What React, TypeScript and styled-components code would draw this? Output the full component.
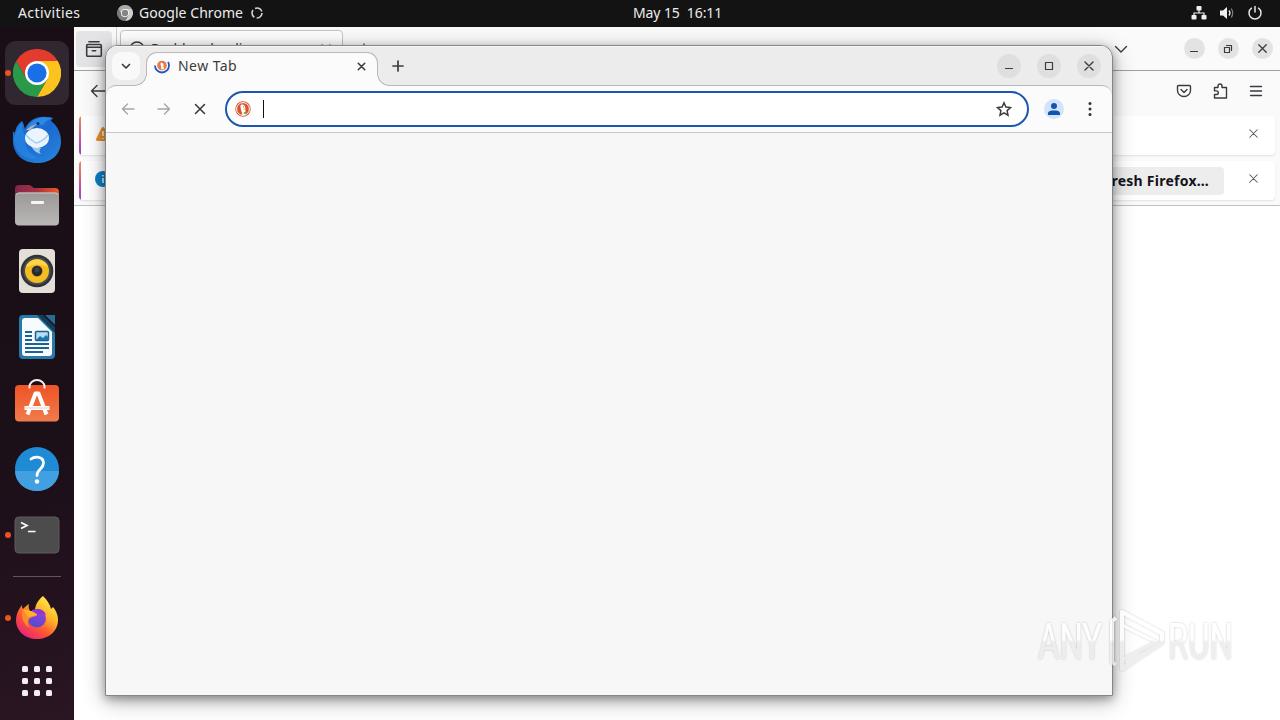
import type { FC, ReactNode } from 'react';
import styled, { createGlobalStyle } from 'styled-components';

const GlobalStyle = createGlobalStyle`
    * {
        box-sizing: border-box;
    }

    body {
        margin: 0;
        overflow: hidden;

        font-family: 'Noto Sans', 'Open Sans', sans-serif;
    }

    svg {
        display: block;
        flex-shrink: 0;
    }
`;

const Desktop = styled.div`
    position: relative;
    display: flex;
    flex-direction: column;

    width: 1280px;
    height: 720px;
    overflow: hidden;

    background: #fff;
`;

/* top panel */

const TopBar = styled.header`
    display: grid;
    grid-template-columns: 615px auto 1fr;
    align-items: center;
    flex-shrink: 0;

    height: 27px;
    padding: 0 17px 1px 18px;

    color: #ececec;
    background: #131313;
`;

const PanelGroup = styled.div<{ $end?: boolean }>`
    display: flex;
    align-items: center;
    justify-content: ${({ $end }) => ($end ? 'flex-end' : 'flex-start')};
    gap: ${({ $end }) => ($end ? '12px' : '0')};
`;

const PanelText = styled.span<{ $width: number; $spacing?: number }>`
    width: ${({ $width }) => $width}px;

    font-size: 14px;
    line-height: 26px;
    letter-spacing: ${({ $spacing = 0 }) => $spacing}px;
    white-space: pre;
`;

const AppMenu = styled.div`
    display: flex;
    align-items: center;
    gap: 6px;

    margin-left: 37px;
`;

/* dock */

const Workspace = styled.div`
    display: flex;
    flex: 1;

    min-height: 0;
`;

const Dock = styled.nav`
    display: flex;
    flex-direction: column;
    align-items: center;
    flex-shrink: 0;

    width: 74px;
    padding-top: 13px;

    background: linear-gradient(165deg, #190e16 0%, #1b0f18 60%, #2a1523 100%);
`;

const DockCell = styled.div<{ $running?: boolean; $height?: number }>`
    display: grid;
    grid-template-columns: 5px 64px 5px;
    align-items: center;

    width: 74px;
    height: ${({ $height = 66 }) => $height}px;

    &::before {
        content: '';

        justify-self: start;

        width: 6px;
        height: 6px;
        margin-left: 5px;

        border-radius: 50%;
        background: ${({ $running }) => ($running ? '#e95420' : 'transparent')};
        z-index: 1;
    }
`;

const DockTile = styled.div<{ $active?: boolean; $height?: number }>`
    display: flex;
    align-items: center;
    justify-content: center;

    width: 64px;
    height: ${({ $height = 64 }) => $height}px;

    border-radius: 11px;
    background: ${({ $active }) => ($active ? '#302731' : 'transparent')};
`;

const DockDivider = styled.div`
    width: 48px;
    height: 1px;
    margin: 8px 0;

    background: #60565e;
`;

/* firefox */

const FirefoxWindow = styled.section`
    display: flex;
    flex: 1;
    flex-direction: column;

    min-width: 0;

    color: #3a3a40;
    background: #fff;
`;

const FirefoxTabs = styled.div`
    display: flex;
    align-items: center;
    flex-shrink: 0;

    height: 44px;
    padding: 0 7.5px 0 2px;

    border-bottom: 1px solid #a0a0a4;
    background: #fafafb;
`;

const ArchiveButton = styled.div`
    display: flex;
    align-items: center;
    justify-content: center;

    width: 36px;
    height: 36px;

    border-radius: 4px;
    background: #e4e4e6;
`;

const TabsSeparator = styled.div`
    align-self: stretch;

    width: 1px;
    margin: 0 3px 0 4px;

    background: #cfcfd2;
`;

const FirefoxTab = styled.div`
    display: flex;
    align-items: center;
    gap: 6px;

    width: 223px;
    height: 37px;
    padding: 1px 8px 0 8px;

    border: 1px solid #c4c4c8;
    border-radius: 4px;
    background: #fdfdfd;
`;

const FirefoxTabTitle = styled.span`
    flex: 1;

    font-size: 14px;
    line-height: 20px;
`;

const FirefoxAdd = styled.div`
    flex: 1;

    padding: 2px 0 0 14px;
`;

const WindowButtons = styled.div<{ $gap: number; $inset?: number }>`
    display: flex;
    gap: ${({ $gap }) => $gap}px;

    margin-left: ${({ $inset = 0 }) => $inset}px;
`;

const WindowButton = styled.div<{ $size: number }>`
    display: flex;
    align-items: center;
    justify-content: center;

    width: ${({ $size }) => $size}px;
    height: ${({ $size }) => $size}px;

    border-radius: 50%;
    background: #e3e3e3;
`;

const ChromeButton = styled(WindowButton)`
    margin-top: 2px;

    background: #dfdfdf;
`;

const FirefoxNav = styled.div`
    display: flex;
    align-items: center;
    justify-content: space-between;
    flex-shrink: 0;

    height: 41px;
    padding: 0 16px 1px;

    background: #fafafb;
`;

const NavTools = styled.div`
    display: flex;
    gap: 20px;
`;

const Notices = styled.div`
    display: flex;
    flex-direction: column;
    flex-shrink: 0;
    gap: 6px;

    height: 94px;
    padding: 4px 5px 0;

    border-bottom: 1px solid #c0c0c3;
    background: #fafafb;
`;

const Notice = styled.div`
    display: flex;
    align-items: center;

    height: 39px;
    padding-right: 14px;

    color: #55555b;
    border-radius: 4px;
    background: linear-gradient(#f08a4e, #d0529a 55%, #8a46c8) 0 0 / 2px 100% no-repeat #fff;
    box-shadow: 0 1px 2px rgba(58, 57, 68, 0.13);
`;

const NoticeBody = styled.div`
    display: flex;
    align-items: center;
    flex: 1;

    padding: 0 0 4px 16px;
`;

const NoticeFiller = styled.div`
    flex: 1;
`;

const RefreshButton = styled.div`
    width: 150px;
    height: 28px;
    margin: 4px 22px 0 0;
    padding-right: 15px;

    font-size: 14px;
    font-weight: 700;
    line-height: 27px;
    text-align: right;
    letter-spacing: 0.25px;
    white-space: nowrap;

    color: #15141a;
    border-radius: 4px;
    background: #ededee;
`;

/* chrome */

const ChromeShadow = styled.div`
    position: absolute;
    top: 45px;
    left: 105px;

    width: 1008px;
    height: 651px;

    border-radius: 12px 12px 0 0;
    box-shadow:
        0 3px 10px rgba(0, 0, 0, 0.32),
        0 5px 22px rgba(0, 0, 0, 0.3);
`;

const ChromeWindow = styled.section`
    position: absolute;
    top: 45px;
    left: 105px;
    display: flex;
    flex-direction: column;

    width: 1008px;
    height: 651px;
    overflow: hidden;

    color: #3c3c3c;
    border: 1px solid #858585;
    border-radius: 12px 12px 0 0;
    background: #ececec;
`;

const ChromeStrip = styled.div`
    display: flex;
    align-items: flex-start;
    flex-shrink: 0;

    height: 39px;
    padding: 6px 11px 0 6px;

    box-shadow: inset 0 1px 0 #f8f8f8;
`;

const TabSearch = styled.div`
    position: relative;
    display: flex;
    align-items: center;
    justify-content: center;
    z-index: 2;

    width: 28px;
    height: 28px;
    margin-right: 6px;

    border-radius: 9px;
    background: #f9f9f9;
`;

const ChromeTab = styled.div`
    position: relative;
    display: flex;
    align-items: center;
    gap: 8px;
    z-index: 1;

    width: 232px;
    height: 34px;
    padding: 0 9px 7px 7px;

    border: 1px solid #b9b9b9;
    border-bottom: 0;
    border-radius: 11px 11px 0 0;
    background: #fbfbfb;

    &::before,
    &::after {
        position: absolute;
        bottom: 0;

        content: '';

        width: 12px;
        height: 12px;
    }

    &::before {
        left: -12px;

        background: radial-gradient(circle at 0 0, #ececec 10.5px, #b9b9b9 11px, #b9b9b9 11.5px, #fbfbfb 12px);
    }

    &::after {
        right: -12px;

        background: radial-gradient(circle at 100% 0, #ececec 10.5px, #b9b9b9 11px, #b9b9b9 11.5px, #fbfbfb 12px);
    }
`;

const ChromeTabTitle = styled.span`
    flex: 1;

    font-size: 14px;
    line-height: 20px;
    letter-spacing: 0.45px;
`;

const NewTabButton = styled.div`
    flex: 1;

    padding: 6px 0 0 12px;
`;

const ChromeToolbar = styled.div`
    display: flex;
    align-items: center;
    flex-shrink: 0;

    height: 48px;
    padding: 0 14px;

    border-top: 1px solid #b9b9b9;
    border-bottom: 1px solid #c9c9c9;
    border-radius: 10px 10px 0 0;
    background: #fbfbfb;
`;

const ToolbarNav = styled.div`
    display: flex;
    gap: 20px;

    margin-right: 17px;
`;

const Omnibox = styled.div`
    display: flex;
    align-items: center;
    flex: 1;

    height: 36px;
    padding: 0 15px 0 8px;

    border: 2px solid #1a56b4;
    border-radius: 18px;
    background: #fff;
`;

const Caret = styled.div`
    flex: 1;

    height: 18px;
    margin-left: 12px;

    border-left: 1px solid #111;
`;

const ProfileBadge = styled.div`
    display: flex;
    align-items: center;
    justify-content: center;

    width: 20px;
    height: 20px;
    margin: 0 18px 0 15px;

    border-radius: 50%;
    background: #d2e3fb;
`;

const ChromePage = styled.main`
    flex: 1;

    background: #f7f7f7;
`;

const Watermark = styled.svg`
    position: absolute;
    top: 600px;
    left: 1030px;
`;

interface StrokeIconProps {
    size?: number;
    width?: number;
    color?: string;
    children: ReactNode;
}

const StrokeIcon: FC<StrokeIconProps> = ({ size = 16, width = 1.4, color = 'currentColor', children }) => (
    <svg
        width={size}
        height={size}
        viewBox='0 0 16 16'
        fill='none'
        stroke={color}
        strokeWidth={width}
        strokeLinecap='round'
        strokeLinejoin='round'
    >
        {children}
    </svg>
);

const CloseGlyph: FC<{ size?: number; width?: number }> = ({ size = 16, width = 1.4 }) => (
    <StrokeIcon
        size={size}
        width={width}
    >
        <path d='m4 4 8 8M12 4l-8 8' />
    </StrokeIcon>
);

const ChromeLogo: FC<{ size: number; mono?: boolean }> = ({ size, mono }) => (
    <svg width={size} height={size} viewBox='0 0 48 48'>
        <path d='M3.2 12A24 24 0 0 1 44.8 12H24L13.6 30Z' fill={mono ? '#a9a9a9' : '#e33b2e'} />
        <path d='M44.8 12A24 24 0 0 1 24 48L34.4 30 24 12Z' fill={mono ? '#cfcfcf' : '#fcc31e'} />
        <path d='M24 48A24 24 0 0 1 3.2 12L13.6 30 34.4 30Z' fill={mono ? '#7d7d7d' : '#2a9a48'} />
        <circle cx='24' cy='24' r='12' fill='#fff' />
        <circle cx='24' cy='24' r='9.6' fill={mono ? '#858585' : '#1b6fe6'} />
    </svg>
);

const ThunderbirdLogo = () => (
    <svg width='50' height='50' viewBox='0 -1 50 50'>
        <defs>
            <linearGradient id='tb' x1='0' y1='0' x2='0.7' y2='1'>
                <stop offset='0' stopColor='#1f78d8' />
                <stop offset='0.5' stopColor='#1a69cf' />
                <stop offset='1' stopColor='#2680dc' />
            </linearGradient>
        </defs>
        <path
            d='M1 17c1-1 2 0 2 3 0-7 3-11 7-14 2 3 2 5 3 8C17 5 25 1 34 2c3 0 5 1 7 1-1 1-2 2-2 3 6 4 10 12 10 20 0 14-10 22-24 22C11 48 1 39 1 26Z'
            fill='url(#tb)'
        />
        <path d='M2 25c1-8 4-12 8-18-1 7 2 12 4 16-2 10 4 17 13 20C14 46 2 38 2 25Z' fill='#2f9af0' opacity='0.4' />
        <path d='M15 13C21 2 33 1 41 3c-5 1-8 4-10 7-5-1-10 0-16 3Z' fill='#2d8ae4' />
        <path d='M18 29c3 6 6 9 11 10-2-2-2-4 0-6Z' fill='#9cc9f0' />
        <ellipse cx='25' cy='23' rx='12' ry='10' fill='#eaf4fd' />
        <path d='M14 20c3 4 7 6 10 8 5-1 9-4 12-8' fill='none' stroke='#a8cdee' strokeWidth='1.5' />
        <circle cx='26' cy='8.500' r='1.500' fill='#0d2d68' />
        <path d='M14 15c3-3 7-5 11-6-2 2-5 4-7 6Z' fill='#c3b2b4' />
    </svg>
);

const FilesLogo = () => (
    <svg width='46' height='42' viewBox='0 0 46 42'>
        <defs>
            <linearGradient id='folder' x1='0' x2='1'>
                <stop offset='0' stopColor='#81264f' />
                <stop offset='0.5' stopColor='#a8323f' />
                <stop offset='1' stopColor='#ef5a24' />
            </linearGradient>
            <linearGradient id='front' x1='0' y1='0' x2='0' y2='1'>
                <stop offset='0' stopColor='#9a9998' />
                <stop offset='1' stopColor='#b9b8b7' />
            </linearGradient>
        </defs>
        <path d='M1 18V5q0-4 4-4h10q2 0 3 1.500t3 1.500h20q4 0 4 4v12Z' fill='url(#folder)' />
        <rect x='1' y='8.500' width='44' height='33' rx='4' fill='url(#front)' />
        <path d='M2 11q1-2 3-2h36q3 0 3 2' fill='none' stroke='#c9c9c9' />
        <rect x='17' y='17' width='13' height='3' rx='1' fill='#f6f6f6' />
    </svg>
);

const RhythmboxLogo = () => (
    <svg width='38' height='46' viewBox='0 0 38 46'>
        <rect x='1' y='1' width='36' height='44' rx='4' fill='#e2dfd6' />
        <circle cx='19' cy='23' r='16.300' fill='#2f3237' />
        <circle cx='19' cy='23' r='13.800' fill='#4a4e54' />
        <circle cx='19' cy='23' r='12' fill='#f3bd22' />
        <path d='M8 19a11.800 11.800 0 0 1 22 0Q19 14 8 19Z' fill='#ffd448' />
        <circle cx='19' cy='23' r='5.800' fill='#c9931d' />
        <circle cx='19' cy='23' r='5.200' fill='#26292e' />
        <circle cx='19' cy='22' r='2.500' fill='#3c4249' />
    </svg>
);

const WriterLogo = () => (
    <svg width='38' height='46' viewBox='0 0 38 46'>
        <path d='M5 1h16l16 17v23q0 4-4 4H5q-4 0-4-4V5q0-4 4-4Z' fill='#2779a9' />
        <path d='M7 4h13l14 14v21q0 3-3 3H7q-3 0-3-3V7q0-3 3-3Z' fill='#f8fbfd' />
        <path d='M19 1 37 19v-6L25 1Z' fill='#133e5a' />
        <path d='M27 1h10v10Z' fill='#286c95' />
        <path d='M7 18h7M7 22h7M7 26h7M7 30h24M7 34h24M7 38h18' stroke='#1a6495' strokeWidth='1.800' />
        <rect x='17.500' y='17.500' width='13' height='9' rx='1' fill='#b8def4' stroke='#176291' strokeWidth='1.500' />
        <path d='m18 26 4-4 3 2 3-3 3 3v2Z' fill='#1b75ab' />
    </svg>
);

const SoftwareLogo = () => (
    <svg width='46' height='46' viewBox='0 2.5 46 46' overflow='visible'>
        <defs>
            <linearGradient id='bag' x1='0' y1='0' x2='0' y2='1'>
                <stop offset='0' stopColor='#ef5425' />
                <stop offset='1' stopColor='#f07b4d' />
            </linearGradient>
        </defs>
        <rect x='1' y='7.500' width='44' height='36.500' rx='4' fill='url(#bag)' />
        <path d='M15.500 11v-2a7.500 6.500 0 0 1 15 0v2' fill='none' stroke='#f5f0ed' strokeWidth='2' />
        <path d='m13.500 37 8-21h3l8 21M10.500 30.500h25' fill='none' stroke='#fff' strokeWidth='4' strokeLinejoin='round' />
        <path d='M10.500 30.500h25' stroke='#e9cfc5' />
    </svg>
);

const HelpLogo = () => (
    <svg width='46' height='46' viewBox='0 0 46 46'>
        <circle cx='23' cy='23' r='22' fill='#208bd5' />
        <path d='M1 25a22 20 0 0 0 44 0Z' fill='#429fe0' />
        <path
            d='M17 13c4-3 12.500-2.500 12.500 4 0 6-6.500 6-6.500 12.500'
            fill='none'
            stroke='#fff'
            strokeWidth='2.800'
            strokeLinecap='round'
        />
        <circle cx='23' cy='35.500' r='2.200' fill='#fff' />
    </svg>
);

const TerminalLogo = () => (
    <svg width='46' height='38' viewBox='0 0 46 38'>
        <rect x='1' y='1' width='44' height='36' rx='4' fill='#4c4c4c' stroke='#5c5c5c' />
        <path d='m7 6.500 6 3-6 3M14 15.500h7.500' fill='none' stroke='#fff' strokeWidth='1.700' />
    </svg>
);

const FirefoxLogo = () => (
    <svg width='44' height='46' viewBox='0 0 44 46'>
        <defs>
            <linearGradient id='ffBody' x1='0.85' y1='0.05' x2='0.2' y2='0.95'>
                <stop offset='0' stopColor='#fff04a' />
                <stop offset='0.38' stopColor='#ffb028' />
                <stop offset='0.65' stopColor='#ff5930' />
                <stop offset='1' stopColor='#e8237a' />
            </linearGradient>
            <linearGradient id='ffCore' x1='0.8' y1='0' x2='0.3' y2='1'>
                <stop offset='0' stopColor='#a938dc' />
                <stop offset='1' stopColor='#484fd2' />
            </linearGradient>
        </defs>
        <path
            d='M28 1c4 4 7 8 8 13l2-2c4 5 5 9 5 13 0 11-9 19-21 19S1 36 1 25c0-5 2-10 6-15 0 2 0 3 1 4 2-2 4-4 6-5-1 3 0 5 1 7h5c0-6 3-11 8-15Z'
            fill='url(#ffBody)'
        />
        <circle cx='22' cy='23.500' r='9' fill='url(#ffCore)' />
        <path d='M17 15c6-2 12-1 14 5-2-1-4-2-6-1l-8 1Z' fill='#8a38d2' />
        <path d='M8 14c4 2 7 1 10 3 2 1 4 2 4 3-2 2-7 2-8 4-2 3-1 7 1 9C9 30 5 22 8 14Z' fill='#ff8a28' />
        <path d='M8 14c4 2 7 1 10 3 2 1 4 2 4 3-3 1-7 1-9 2Z' fill='#ffb22e' />
    </svg>
);

const AppGrid = () => (
    <svg width='30' height='30' viewBox='0 0 30 30' fill='#f5edf4'>
        {[0, 12, 24].map((y) =>
            [0, 12, 24].map((x) => (
                <rect
                    key={`${x}-${y}`}
                    x={x}
                    y={y}
                    width='6'
                    height='6'
                    rx='1.5'
                />
            )),
        )}
    </svg>
);

const DuckLogo: FC<{ size: number }> = ({ size }) => (
    <svg width={size} height={size} viewBox='0 0 16 16'>
        <circle cx='8' cy='8' r='7.700' fill='#d9532f' />
        <circle cx='8' cy='8' r='6.400' fill='none' stroke='#fff' strokeWidth='1' />
        <path d='M5.500 4.500C6 3 9 3 10 5.500c.5 1.500 0 3 .5 4.500l.5 3.500-3.500 1C7 11 5 7 5.500 4.500Z' fill='#fff' />
        <path d='M8.500 7.500c1 0 2.500 0 3 .3-.5.7-2 .9-3 .9Z' fill='#f6b52e' />
        <path d='m8.500 11.500 3-1v2.500l-3-.5Z' fill='#5ca944' />
        <circle cx='8.500' cy='5.800' r='0.500' fill='#2d4f8e' />
    </svg>
);

const LoadingFavicon = () => (
    <svg width='16' height='16' viewBox='0 0 16 16'>
        <circle cx='8' cy='7.500' r='4.800' fill='#e8784f' />
        <path d='M6.500 5.500C7 4 9.500 5 9.500 7l.5 4-2.500.5Z' fill='#fff' />
        <path d='M8.500 7.500h2.500l-2 1.500Z' fill='#f6b52e' />
        <path d='M1 7.500a7 7 0 0 0 14 0c0-1.500-.3-2.500-1-3.500' fill='none' stroke='#1f56c2' strokeWidth='1.800' />
    </svg>
);

const DOCK_APPS = [
    { name: 'chrome', icon: <ChromeLogo size={48} />, running: true, active: true },
    { name: 'thunderbird', icon: <ThunderbirdLogo /> },
    { name: 'files', icon: <FilesLogo /> },
    { name: 'rhythmbox', icon: <RhythmboxLogo /> },
    { name: 'writer', icon: <WriterLogo /> },
    { name: 'software', icon: <SoftwareLogo /> },
    { name: 'help', icon: <HelpLogo /> },
    { name: 'terminal', icon: <TerminalLogo />, running: true },
];

const SystemIcons = () => (
    <PanelGroup $end>
        <svg width='16' height='16' viewBox='0 0 16 16' fill='#f0f0f0'>
            <rect x='5.500' y='1' width='5' height='4.500' rx='0.800' />
            <rect x='0.500' y='10' width='5' height='4.500' rx='0.800' />
            <rect x='10.500' y='10' width='5' height='4.500' rx='0.800' />
            <path d='M8 5v3M3 10V8h10v2' fill='none' stroke='#f0f0f0' strokeWidth='1.2' />
        </svg>
        <svg width='16' height='16' viewBox='0 0 16 16' fill='none'>
            <path d='M1 5.500h3L8 2v12l-4-3.500H1Z' fill='#f0f0f0' />
            <path d='M10 5.500q2 2.500 0 5' stroke='#f0f0f0' strokeWidth='1.300' />
            <path d='M12.200 3.500q3 4.500 0 9' stroke='#808080' strokeWidth='1.200' />
        </svg>
        <StrokeIcon color='#e6e6e6' width={1.5}>
            <path d='M4.500 3.200a6 6 0 1 0 7 0M8 1.500v5.500' />
        </StrokeIcon>
    </PanelGroup>
);

const Firefox = () => (
    <FirefoxWindow>
        <FirefoxTabs>
            <ArchiveButton>
                <StrokeIcon size={18}>
                    <path d='M3.500 1.500h9M2.500 4h11q1 0 1 1v8.500q0 1-1 1h-11q-1 0-1-1V5q0-1 1-1ZM1.500 6.500h13M6.500 9.500h3' />
                </StrokeIcon>
            </ArchiveButton>
            <TabsSeparator />
            <FirefoxTab>
                <StrokeIcon>
                    <circle cx='8' cy='8' r='7' />
                    <path d='M8 7v4M8 4.500v.2' />
                </StrokeIcon>
                <FirefoxTabTitle>Problem loading page</FirefoxTabTitle>
                <CloseGlyph size={16} />
            </FirefoxTab>
            <FirefoxAdd>
                <StrokeIcon size={14}>
                    <path d='M8 1v14M1 8h14' />
                </StrokeIcon>
            </FirefoxAdd>
            <StrokeIcon>
                <path d='m2.500 5.500 5.500 5.500 5.500-5.500' />
            </StrokeIcon>
            <WindowButtons $gap={13} $inset={55}>
                <WindowButton $size={21}>
                    <StrokeIcon width={1.2}>
                        <path d='M4.500 10.500h7' />
                    </StrokeIcon>
                </WindowButton>
                <WindowButton $size={21}>
                    <StrokeIcon width={1.2}>
                        <path d='M4.500 6.500h5v5h-5ZM6.500 4.500h5v5' />
                    </StrokeIcon>
                </WindowButton>
                <WindowButton $size={21}>
                    <CloseGlyph size={15} />
                </WindowButton>
            </WindowButtons>
        </FirefoxTabs>
        <FirefoxNav>
            <StrokeIcon>
                <path d='M15 8H1.500M7 2.500 1.500 8 7 13.500' />
            </StrokeIcon>
            <NavTools>
                <StrokeIcon>
                    <path d='M2.500 2.500h11q1 0 1 1v4a6.500 6 0 0 1-13 0v-4q0-1 1-1ZM5 6.500l3 3 3-3' />
                </StrokeIcon>
                <StrokeIcon>
                    <path d='M2.500 4.500h3.500v-1.500a2 2 0 0 1 4 0v1.500h4.500v10.500h-12v-3.500h2a1.800 1.800 0 0 0 0-3.600h-2Z' />
                </StrokeIcon>
                <StrokeIcon>
                    <path d='M2.500 3.500h11M2.500 8h11M2.500 12.500h11' />
                </StrokeIcon>
            </NavTools>
        </FirefoxNav>
        <Notices>
            <Notice>
                <NoticeBody>
                    <svg width='16' height='16' viewBox='0 0 16 16'>
                        <path d='M8 1q1 0 1.500 1L15 13q.5 2-1.500 2h-11Q.5 15 1 13L6.500 2Q7 1 8 1Z' fill='#e8912d' />
                        <path d='M8 5v5M8 12v1' stroke='#fff' strokeWidth='1.500' />
                    </svg>
                    <NoticeFiller />
                    <CloseGlyph size={15} width={1.100} />
                </NoticeBody>
            </Notice>
            <Notice>
                <NoticeBody>
                    <svg width='16' height='16' viewBox='0 0 16 16'>
                        <circle cx='8' cy='8' r='8' fill='#0b7fc7' />
                        <path d='M8 7v5M8 4v1.500' stroke='#fff' strokeWidth='1.500' />
                    </svg>
                    <NoticeFiller />
                    <RefreshButton>Refresh Firefox…</RefreshButton>
                    <CloseGlyph size={15} width={1.100} />
                </NoticeBody>
            </Notice>
        </Notices>
    </FirefoxWindow>
);

const Chrome = () => (
    <ChromeWindow>
        <ChromeStrip>
            <TabSearch>
                <StrokeIcon width={1.700}>
                    <path d='m4.500 6.500 3.500 3.500 3.500-3.500' />
                </StrokeIcon>
            </TabSearch>
            <ChromeTab>
                <LoadingFavicon />
                <ChromeTabTitle>New Tab</ChromeTabTitle>
                <CloseGlyph size={13} width={1.900} />
            </ChromeTab>
            <NewTabButton>
                <StrokeIcon width={1.700}>
                    <path d='M8 3v10M3 8h10' />
                </StrokeIcon>
            </NewTabButton>
            <WindowButtons $gap={16}>
                <ChromeButton $size={24}>
                    <StrokeIcon width={1.2}>
                        <path d='M4.500 10.500h7' />
                    </StrokeIcon>
                </ChromeButton>
                <ChromeButton $size={24}>
                    <StrokeIcon width={1.2}>
                        <path d='M4.500 4.500h7v7h-7Z' />
                    </StrokeIcon>
                </ChromeButton>
                <ChromeButton $size={24}>
                    <CloseGlyph />
                </ChromeButton>
            </WindowButtons>
        </ChromeStrip>
        <ChromeToolbar>
            <ToolbarNav>
                <StrokeIcon color='#a5a5a5'>
                    <path d='M14 8H2.500M7.500 3l-5 5 5 5' />
                </StrokeIcon>
                <StrokeIcon color='#a5a5a5'>
                    <path d='M2 8h11.500M8.500 3l5 5-5 5' />
                </StrokeIcon>
                <StrokeIcon width={1.600}>
                    <path d='m3.500 3.500 9 9M12.500 3.500l-9 9' />
                </StrokeIcon>
            </ToolbarNav>
            <Omnibox>
                <DuckLogo size={16} />
                <Caret />
                <StrokeIcon width={1.500}>
                    <path
                        d='m8 1.800 1.900 4.200 4.600.5-3.400 3.100.9 4.600L8 11.900l-4 2.300.9-4.600L1.500 6.500 6.100 6Z'
                        strokeLinejoin='miter'
                    />
                </StrokeIcon>
            </Omnibox>
            <ProfileBadge>
                <svg width='14' height='14' viewBox='0 0 14 14' fill='#1253b0'>
                    <circle cx='7' cy='4' r='3' />
                    <path d='M1 13v-1.500C1 9 4 8.500 7 8.500s6 .5 6 3V13Z' />
                </svg>
            </ProfileBadge>
            <svg width='16' height='16' viewBox='0 0 16 16' fill='#333'>
                <circle cx='8' cy='2.500' r='1.500' />
                <circle cx='8' cy='8' r='1.500' />
                <circle cx='8' cy='13.500' r='1.500' />
            </svg>
        </ChromeToolbar>
        <ChromePage />
    </ChromeWindow>
);

const AnyRunMark = () => (
    <Watermark width='250' height='90' viewBox='0 0 250 90'>
        <defs>
            <filter id='soft' x='-10%' y='-10%' width='120%' height='120%'>
                <feDropShadow dx='0' dy='0' stdDeviation='1.300' floodColor='#000' floodOpacity='0.3' />
            </filter>
            <linearGradient id='fade' gradientUnits='userSpaceOnUse' x1='0' y1='11' x2='0' y2='71'>
                <stop offset='0.48' stopColor='#fff' />
                <stop offset='0.52' stopColor='#ebebeb' />
            </linearGradient>
        </defs>
        <g
            filter='url(#soft)'
            opacity='0.8'
            fill='url(#fade)'
            fontFamily='Roboto, sans-serif'
            fontSize='50'
        >
            <text x='8' y='59' textLength='64' lengthAdjust='spacingAndGlyphs'>
                ANY
            </text>
            <text x='138' y='59' textLength='65' lengthAdjust='spacingAndGlyphs'>
                RUN
            </text>
            <g fill='none' stroke='url(#fade)' strokeWidth='4' strokeLinejoin='round'>
                <path d='M92 12 132 33.500v9L92 69Z' />
                <path d='M92 25 126 42 92 60' strokeWidth='3' />
                <path d='M86 18l-4 3v41l4 3' />
            </g>
        </g>
    </Watermark>
);

export default function App() {
    return (
        <>
            <GlobalStyle />
            <Desktop>
                <TopBar>
                    <PanelGroup>
                        <PanelText $width={62} $spacing={0.4}>
                            Activities
                        </PanelText>
                        <AppMenu>
                            <ChromeLogo size={16} mono />
                            <PanelText $width={104} $spacing={0.05}>
                                Google Chrome
                            </PanelText>
                            <svg width='16' height='16' viewBox='0 0 16 16'>
                                <circle
                                    cx='8'
                                    cy='8'
                                    r='5'
                                    fill='none'
                                    stroke='#d5d5d5'
                                    strokeWidth='1.600'
                                    strokeDasharray='8 2.470'
                                />
                            </svg>
                        </AppMenu>
                    </PanelGroup>
                    <PanelText $width={89} $spacing={-0.1}>
                        {'May 15  16:11'}
                    </PanelText>
                    <SystemIcons />
                </TopBar>
                <Workspace>
                    <Dock>
                        {DOCK_APPS.map(({ name, icon, running, active }) => (
                            <DockCell key={name} $running={running}>
                                <DockTile $active={active}>{icon}</DockTile>
                            </DockCell>
                        ))}
                        <DockDivider />
                        <DockCell $running>
                            <DockTile>
                                <FirefoxLogo />
                            </DockTile>
                        </DockCell>
                        <DockCell $height={60}>
                            <DockTile $height={60}>
                                <AppGrid />
                            </DockTile>
                        </DockCell>
                    </Dock>
                    <Firefox />
                </Workspace>
                <ChromeShadow />
                <Chrome />
                <AnyRunMark />
            </Desktop>
        </>
    );
}
